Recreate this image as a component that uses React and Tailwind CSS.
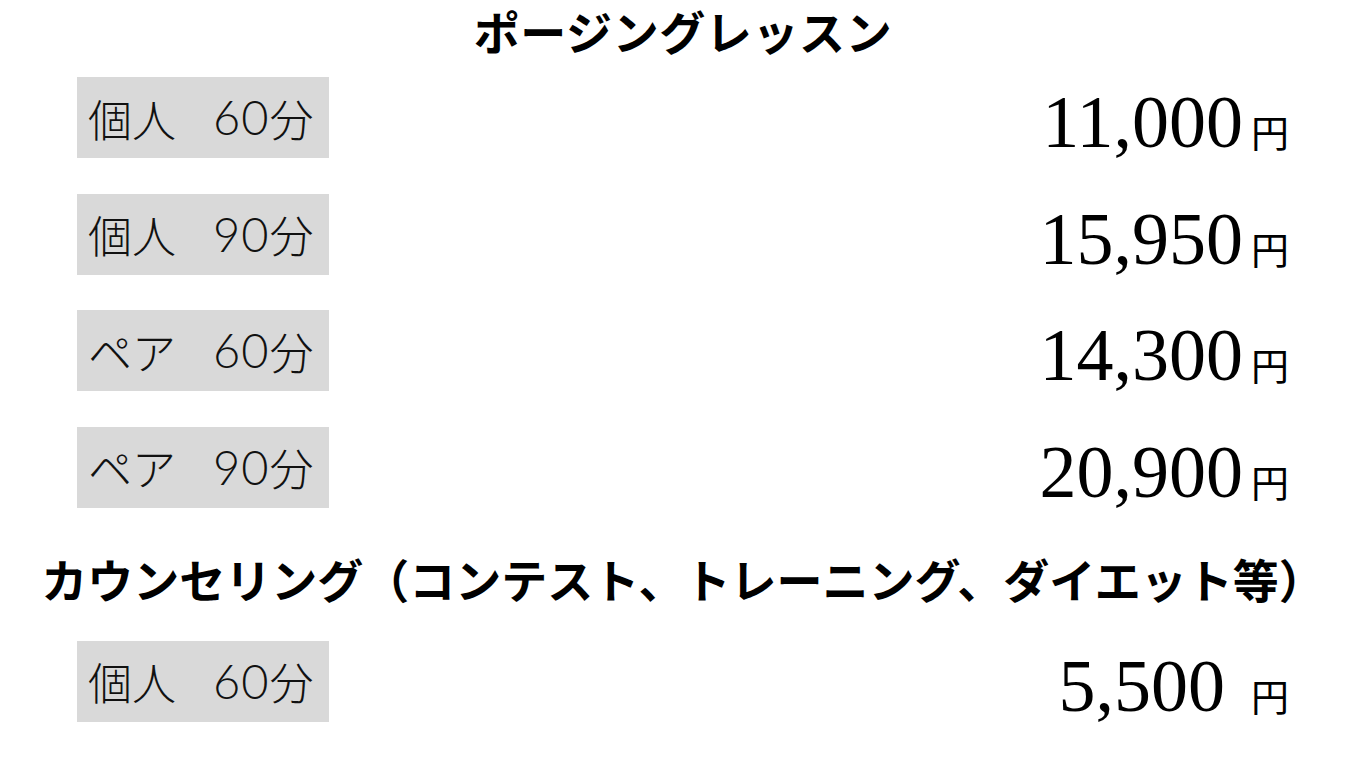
const posing = [
  { name: "個人", time: "60", price: "11,000" },
  { name: "個人", time: "90", price: "15,950" },
  { name: "ペア", time: "60", price: "14,300" },
  { name: "ペア", time: "90", price: "20,900" },
];

const counseling = [{ name: "個人", time: "60", price: "5,500", spaced: true }];

const jp = "font-['Noto_Sans_CJK_JP',sans-serif]";

function PriceRow({ item }) {
  return (
    <div className="flex items-start justify-between h-[81px]">
      {/* label box */}
      <div
        className={`${jp} w-[252px] h-[81px] bg-[#d9d9d9] flex items-center pl-[11px] text-[44px] font-light text-[#111] leading-none`}
      >
        <span>{item.name}</span>
        <span className="ml-[37px] font-['Lato',sans-serif] font-light text-[47px] tracking-[1px]">
          {item.time}
        </span>
        <span className="font-light">分</span>
      </div>

      {/* price */}
      <div className="h-[81px] flex items-baseline leading-[91px] text-black">
        <span className="font-['Liberation_Serif',serif] text-[74px]">
          {item.price}
        </span>
        <span
          className={`${jp} text-[38px] ${item.spaced ? "ml-[26px]" : "ml-[8px]"}`}
        >
          円
        </span>
      </div>
    </div>
  );
}

export default function App() {
  return (
    <div className="w-[1366px] h-[768px] bg-white px-[77px] overflow-hidden">
      {/* Posing lesson */}
      <h2
        className={`${jp} text-[46px] font-bold text-center leading-[60px] tracking-[0.6px] text-black`}
      >
        ポージングレッスン
      </h2>

      <div className="mt-[17px] flex flex-col gap-[35.67px]">
        {posing.map((item, i) => (
          <PriceRow key={i} item={item} />
        ))}
      </div>

      {/* Counseling */}
      <h2
        className={`${jp} mt-[40px] -mx-[40px] text-[46px] font-bold text-center leading-[60px] text-black whitespace-nowrap`}
      >
        カウンセリング（コンテスト、トレーニング、ダイエット等）
      </h2>

      <div className="mt-[33px] flex flex-col gap-[35.67px]">
        {counseling.map((item, i) => (
          <PriceRow key={i} item={item} />
        ))}
      </div>
    </div>
  );
}
